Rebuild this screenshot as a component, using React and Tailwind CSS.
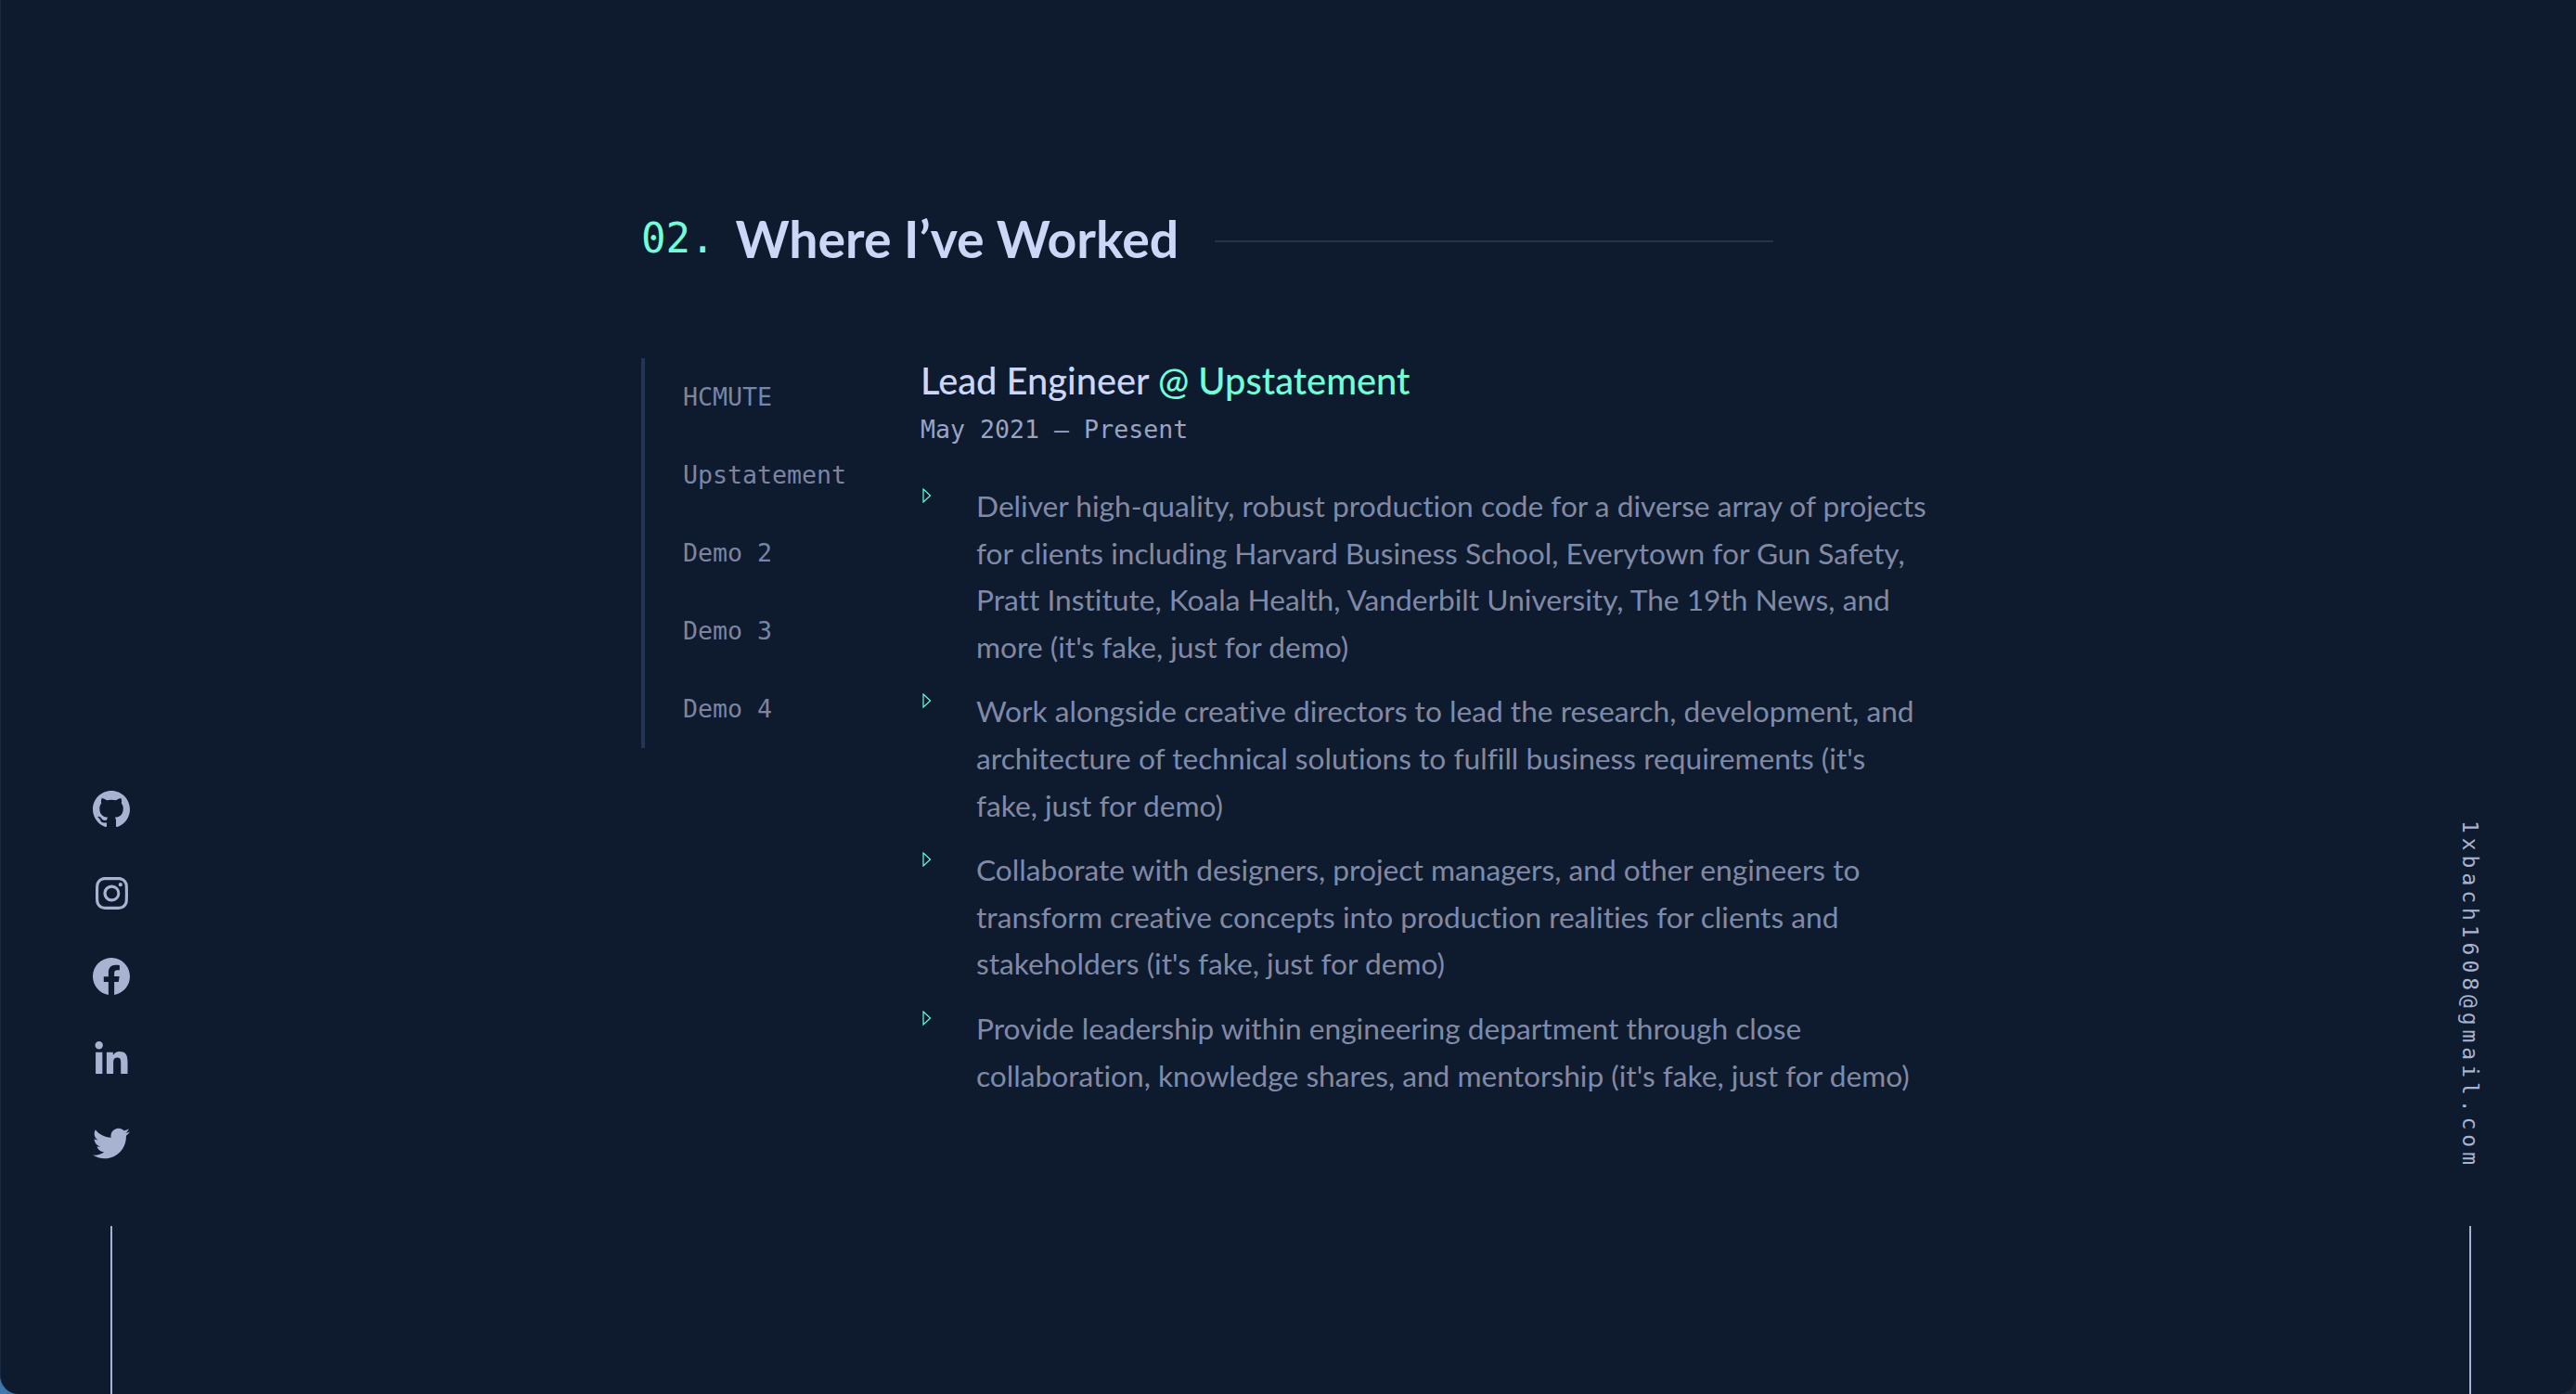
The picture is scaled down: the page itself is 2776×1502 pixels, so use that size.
import React from 'react';
import { BsGithub, BsInstagram, BsFacebook } from 'react-icons/bs';
import { FaLinkedinIn, FaTwitter } from 'react-icons/fa';

const jobs = ['HCMUTE', 'Upstatement', 'Demo 2', 'Demo 3', 'Demo 4'];

const points = [
  [
    'Deliver high-quality, robust production code for a diverse array of projects',
    'for clients including Harvard Business School, Everytown for Gun Safety,',
    'Pratt Institute, Koala Health, Vanderbilt University, The 19th News, and',
    "more (it's fake, just for demo)",
  ],
  [
    'Work alongside creative directors to lead the research, development, and',
    "architecture of technical solutions to fulfill business requirements (it's",
    'fake, just for demo)',
  ],
  [
    'Collaborate with designers, project managers, and other engineers to',
    'transform creative concepts into production realities for clients and',
    "stakeholders (it's fake, just for demo)",
  ],
  [
    'Provide leadership within engineering department through close',
    "collaboration, knowledge shares, and mentorship (it's fake, just for demo)",
  ],
];

const socials = [
  { Icon: BsGithub, size: 'w-[40px] h-[40px]' },
  { Icon: BsInstagram, size: 'w-[35px] h-[35px]' },
  { Icon: BsFacebook, size: 'w-[40px] h-[40px]' },
  { Icon: FaLinkedinIn, size: 'w-[40px] h-[40px]' },
  { Icon: FaTwitter, size: 'w-[40px] h-[40px]' },
];

const sans = "font-['Lato',sans-serif] [font-variant-ligatures:none]";
const mono = "font-['DejaVu_Sans_Mono',monospace]";

const App = () => {
  return (
    <div className="w-[2776px] h-[1502px] bg-linear-to-r from-[#3f78b0] via-[#16233a] to-[#1a2638] overflow-hidden">
      <div className={`relative w-full h-full bg-[#0e1a2e] rounded-b-[20px] border-l border-[#1a2a40] overflow-hidden ${sans}`}>
        <div className="absolute left-0 bottom-0 w-[238px] flex flex-col items-center gap-[69px] text-[#a8b2d1]">
          <div className="flex flex-col items-center gap-[50px]">
            {socials.map(({ Icon, size }, i) => (
              <div key={i} className="w-[40px] h-[40px] flex items-center justify-center">
                <Icon className={size} />
              </div>
            ))}
          </div>
          <div className="w-[2px] h-[181px] bg-[#a8b2d1]" />
        </div>

        <div className="absolute right-[30px] bottom-0 w-[168px] flex flex-col items-center gap-[61px] text-[#a8b2d1]">
          <span className={`${mono} text-[23px] leading-[28px] tracking-[4.95px] [writing-mode:vertical-rl]`}>
            1xbach1608@gmail.com
          </span>
          <div className="w-[2px] h-[181px] bg-[#a8b2d1]" />
        </div>

        <main className="pl-[690px] pt-[222px]">
          <div className="flex items-center w-[1220px] h-[70px]">
            <span className={`${mono} text-[#70fdd8] text-[44px] font-light mr-[22px]`}>02.</span>
            <h2 className="text-[#ccd6f6] text-[55.4px] font-bold whitespace-nowrap">Where I’ve Worked</h2>
            <div className="flex-1 h-[2px] bg-[#25324a] ml-[39px] mt-[6px]" />
          </div>

          <div className="flex mt-[94px]">
            <div className={`w-[301px] h-[420px] border-l-4 border-[#233554] ${mono} text-[26.6px] text-[#7a85a5] shrink-0`}>
              {jobs.map((job) => (
                <div key={job} className="h-[84px] pl-[41px] flex items-center">{job}</div>
              ))}
            </div>
            <div>
              <h3 className="text-[39.8px] leading-[48px] font-medium text-[#ccd6f6] whitespace-nowrap">
                Lead Engineer <span className="text-[#70fdd8]">@ Upstatement</span>
              </h3>
              <p className={`${mono} text-[26.6px] leading-[34px] text-[#9aa4c2] mt-[12px]`}>May 2021 – Present</p>
              <ul className="mt-[40px] flex flex-col gap-[19px]">
                {points.map((lines, i) => (
                  <li key={i} className="flex">
                    <svg viewBox="0 0 10 16" className="w-[10px] h-[16px] mt-[6px] ml-[2px] mr-[48px] shrink-0">
                      <path d="M1 1 L8.5 8 L1 15 Z" fill="none" stroke="#64ffda" strokeWidth="1.2" />
                    </svg>
                    <p className="text-[31.7px] leading-[50.6px] text-[#808aa6] whitespace-nowrap">
                      {lines.map((line) => (
                        <span key={line} className="block">{line}</span>
                      ))}
                    </p>
                  </li>
                ))}
              </ul>
            </div>
          </div>
        </main>
      </div>
    </div>
  );
};

export default App;
